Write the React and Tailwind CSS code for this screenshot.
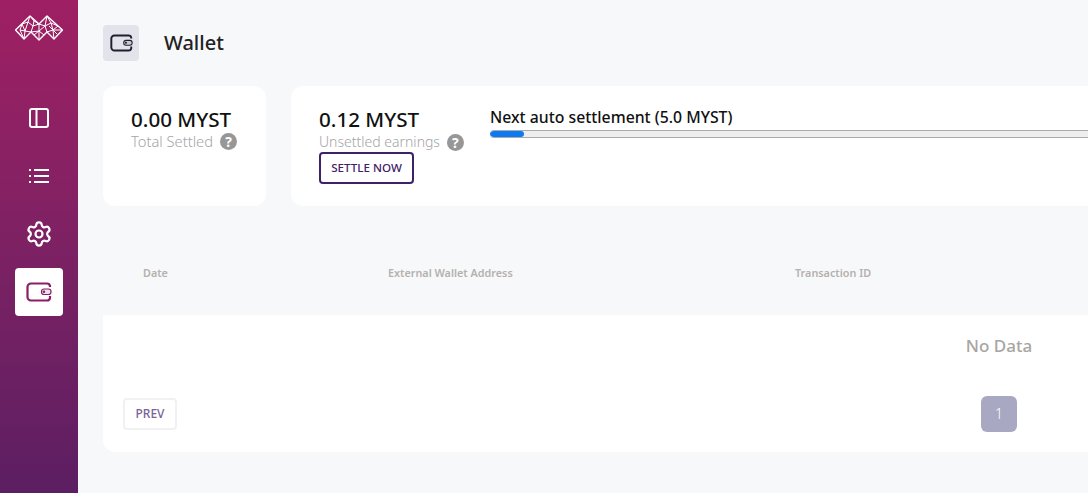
import React from "react";
import { Settings } from "lucide-react";

function Logo() {
    return (
        <svg width="48" height="26" viewBox="0 0 48 26" fill="none" stroke="white" strokeLinejoin="round">
            {/* outline */}
            <path d="M0.5 15 L15 1 L24 9 L32 1 L47.5 15 L39 24 L32 17 L24 25 L16 17 L9 24 Z" strokeWidth="1.4" />
            {/* inner web */}
            <path d="M15 1 L13 7 L7 9 L5 15 L9 24 M13 7 L18 11 L16 17 L10 16 L5 15 M10 16 L7 9 M10 16 L9 24 M13 7 L10 16 M15 1 L19 6 L18 11 M19 6 L24 9 M18 11 L24 9 L24 16 L16 17 M24 16 L24 25 M24 16 L19 20 M24 16 L29 20 M24 16 L30 11 L32 17 M24 9 L30 11 L32 1 M30 11 L36 8 L32 1 M36 8 L38 15 L32 17 M38 15 L43 11 L36 8 M38 15 L39 24 M38 15 L47.5 15 M34 11 L38 15 M42 19 L38 15" strokeWidth="1" />
        </svg>
    );
}

function PanelIcon() {
    return (
        <svg width="22" height="22" viewBox="0 0 22 22" fill="none" stroke="white" strokeWidth="2">
            <rect x="2" y="2" width="18" height="18" rx="2" />
            <path d="M8.5 2 V20" />
        </svg>
    );
}

function ListIcon() {
    return (
        <svg width="22" height="16" viewBox="0 0 22 16" fill="none" stroke="white" strokeWidth="2">
            <path d="M6 2 H21 M6 8 H21 M6 14 H21" />
            <path d="M1 2 H3 M1 8 H3 M1 14 H3" />
        </svg>
    );
}

function WalletIcon({ color, fill, width, height }) {
    return (
        <svg width={width} height={height} viewBox="0 0 26 20" fill="none">
            <path d="M24 5 V4 A3 3 0 0 0 21 1.5 H5 A3.5 3.5 0 0 0 1.5 5 V15 A3.5 3.5 0 0 0 5 18.5 H21 A3 3 0 0 0 24 16 V14" stroke={color} strokeWidth="2.2" />
            <rect x="15.5" y="7" width="9.5" height="5.5" rx="2.5" fill={fill} stroke={color} strokeWidth="1.2" />
            <circle cx="18" cy="9.7" r="1.2" fill={color} />
        </svg>
    );
}

function SidebarItem({ children, active }) {
    return (
        <div className={active ? "w-12 h-12 rounded bg-white flex items-center justify-center" : "w-12 h-12 flex items-center justify-center"}>
            {children}
        </div>
    );
}

function Help() {
    return (
        <span className="w-[17px] h-[17px] shrink-0 rounded-full bg-[#979797] text-white text-[14px] font-bold leading-[17px] text-center ml-[7px] inline-block">?</span>
    );
}

function App() {
    return (
        <div className="flex h-screen overflow-hidden bg-[#f7f8fa] font-['Noto_Sans',sans-serif]">
            {/* Sidebar Navigation */}
            <div className="w-[78px] shrink-0 flex flex-col items-center bg-gradient-to-b from-[#9f1f63] to-[#5c1e62]">
                <div className="mt-[15px] mb-[53px] h-[26px]">
                    <Logo />
                </div>
                <div className="flex flex-col gap-[10px]">
                    <SidebarItem><PanelIcon /></SidebarItem>
                    <SidebarItem><ListIcon /></SidebarItem>
                    <SidebarItem><Settings size={28} color="white" strokeWidth={1.9} /></SidebarItem>
                    <SidebarItem active><WalletIcon color="#8a1f66" fill="#e5e2e8" width={26} height={20} /></SidebarItem>
                </div>
            </div>

            {/* Main Content */}
            <div className="w-[1842px] shrink-0 pl-[25px] pr-[25px] pt-[25px]">
                <header className="flex items-center h-9">
                    <div className="w-9 h-9 rounded bg-[#e3e3ec] flex items-center justify-center">
                        <WalletIcon color="#1f1f2e" fill="#c9c9d2" width={23} height={18} />
                    </div>
                    <h1 className="ml-[25px] text-xl font-medium text-[#222222]">Wallet</h1>
                </header>

                <div className="flex gap-[25px] mt-[25px] h-[120px]">
                    <div className="w-[163px] bg-white rounded-xl pt-5 pl-7">
                        <p className="text-[20.6px] leading-[26px] font-medium text-[#111111]">0.00 MYST</p>
                        <p className="flex items-center -mt-[1px] text-[14.7px] leading-5 font-light text-[#a5a5a5]">Total Settled <Help /></p>
                    </div>
                    <div className="flex-1 bg-white rounded-xl pt-5 pl-7 flex">
                        <div className="w-[171px]">
                            <p className="text-[20.6px] leading-[26px] font-medium text-[#111111]">0.12 MYST</p>
                            <p className="flex items-center text-sm leading-5 font-light text-[#a5a5a5]">Unsettled earnings <Help /></p>
                            <button className="w-[95px] h-8 border-2 border-[#3f2168] rounded text-[11.6px] font-medium text-[#3f2168]">SETTLE NOW</button>
                        </div>
                        <div className="flex-1 pt-[1px] pr-7">
                            <p className="text-[15.8px] leading-5 font-medium text-[#111111]">Next auto settlement (5.0 MYST)</p>
                            <div className="h-2 mt-[3px] rounded-full bg-[#eeeeee] border-b border-t border-[#aaaaaa] overflow-hidden">
                                <div className="h-full w-[34px] bg-[#0d79f2] rounded-full"></div>
                            </div>
                        </div>
                    </div>
                </div>

                {/* Table header */}
                <div className="flex h-[109px] items-center pt-[25px] text-[10.8px] font-semibold text-[#b5b1ad]">
                    <span className="ml-10 w-[245px]">Date</span>
                    <span className="w-[407px]">External Wallet Address</span>
                    <span>Transaction ID</span>
                </div>

                {/* Table body */}
                <div className="bg-white rounded-b-xl h-[137px] flex flex-col">
                    <div className="text-center text-[17px] font-medium text-[#a8a5a2] pt-[19px] leading-[24px]">No Data</div>
                    <div className="relative mt-[38px] flex justify-center">
                        <div className="w-9 h-9 rounded-md bg-[#a9a8c2] text-white text-sm font-light flex items-center justify-center">1</div>
                        <button className="absolute left-5 top-[2px] w-[54px] h-8 border-2 border-[#f1f1f3] rounded text-[12px] font-medium text-[#7a6199]">PREV</button>
                    </div>
                </div>
            </div>
        </div>
    );
}

export default App;
